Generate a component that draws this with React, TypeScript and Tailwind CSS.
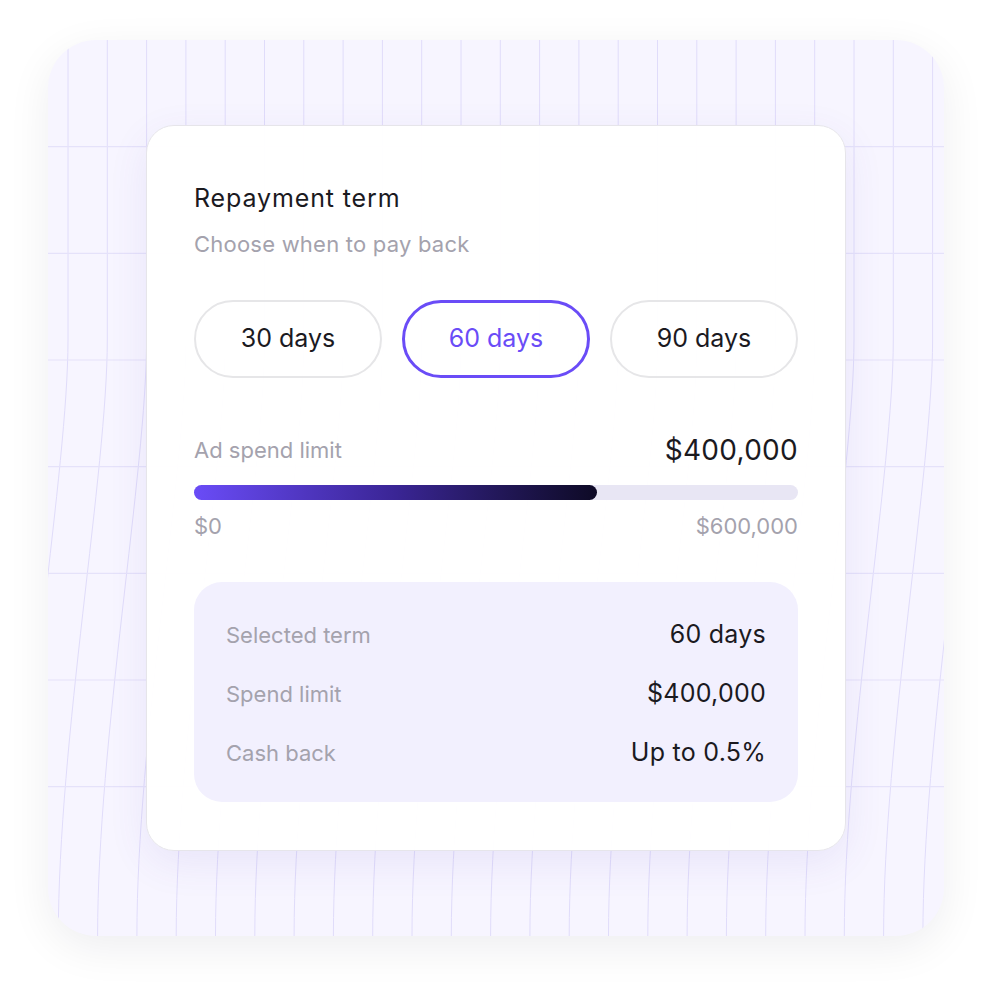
import { useState } from "react";

const TERMS = ["30 days", "60 days", "90 days"];

const SUMMARY = [
  { label: "Selected term", value: "60 days" },
  { label: "Spend limit", value: "$400,000" },
  { label: "Cash back", value: "Up to 0.5%" },
];

// warped backdrop grid, straight at the top and sliding left towards the bottom
function WarpedGrid() {
  const verticals = Array.from({ length: 26 }, (_, i) => 20 + i * 39.3);
  const horizontals = [106.7, 213.3, 320, 426.7, 533.3, 640, 746.7];
  return (
    <svg className="absolute inset-0" width="896" height="896" viewBox="0 0 896 896" fill="none">
      {verticals.map(x => (
        <path
          key={x}
          d={`M${x} 0 L${x} 300 C${x} 430 ${x - 49} 700 ${x - 49} 896`}
          stroke="#e0dcfa"
          strokeWidth="1"
        />
      ))}
      {horizontals.map(y => (
        <line key={y} x1="0" x2="896" y1={y} y2={y} stroke="#e5e2fa" strokeWidth="1.2" />
      ))}
    </svg>
  );
}

export default function App() {
  const [term, setTerm] = useState("60 days");
  const limit = 400000;
  const max = 600000;

  return (
    <div className="flex h-[992px] w-[992px] bg-white pl-[48px] pt-[40px] font-['Inter',sans-serif]">
      <div className="relative h-[896px] w-[896px] overflow-hidden rounded-[48px] bg-[#f7f5ff] shadow-[0_12px_44px_rgba(20,20,40,0.07)]">
        <WarpedGrid />
        <div className="relative ml-[98px] mt-[85px] flex w-[700px] flex-col rounded-[28px] border border-[#e6e5ea] bg-white/[0.97] px-[47px] pb-[48px] pt-[56px] shadow-[0_12px_40px_rgba(90,70,190,0.09)]">
          <h2 className="text-[25px] leading-[32px] tracking-[0.035em] text-[#1b1a1f]">Repayment term</h2>
          <p className="mt-[15px] text-[22px] leading-[30px] tracking-[0.01em] text-[#a4a2ad]">Choose when to pay back</p>

          <div className="mt-[41px] grid grid-cols-3 gap-[20px]">
            {TERMS.map(t => {
              const active = t === term;
              return (
                <button
                  key={t}
                  type="button"
                  onClick={() => setTerm(t)}
                  className={`flex h-[78px] items-center justify-center rounded-full text-[25px] ${
                    active ? "border-[3px] border-[#6a4cf7] text-[#6a4cf7]" : "border-2 border-[#e6e6e8] text-[#1b1a1f]"
                  }`}
                >
                  {t}
                </button>
              );
            })}
          </div>

          <div className="mt-[54px] flex h-[36px] items-center justify-between">
            <span className="text-[22px] text-[#a4a2ad]">Ad spend limit</span>
            <span className="text-[28px] tracking-[0.01em] text-[#1b1a1f]">$400,000</span>
          </div>
          <div className="mt-[17px] h-[15px] w-full rounded-full bg-[#e8e6f4]">
            <div
              className="h-full rounded-full bg-gradient-to-r from-[#6a4cf7] via-[#3a2595] to-[#0e0a26]"
              style={{ width: `${(limit / max) * 100}%` }}
            />
          </div>
          <div className="mt-[11px] flex justify-between text-[22px] leading-[30px] text-[#a4a2ad]">
            <span>$0</span>
            <span>$600,000</span>
          </div>

          <div className="mt-[41px] flex flex-col gap-[29px] rounded-[28px] bg-[#f2f0fe] px-[32px] pb-[34px] pt-[38px]">
            {SUMMARY.map(row => (
              <div key={row.label} className="flex h-[30px] items-center justify-between">
                <span className="text-[22px] text-[#a4a2ad]">{row.label}</span>
                <span className="text-[25px] tracking-[0.01em] text-[#1b1a1f]">{row.value}</span>
              </div>
            ))}
          </div>
        </div>
      </div>
    </div>
  );
}
